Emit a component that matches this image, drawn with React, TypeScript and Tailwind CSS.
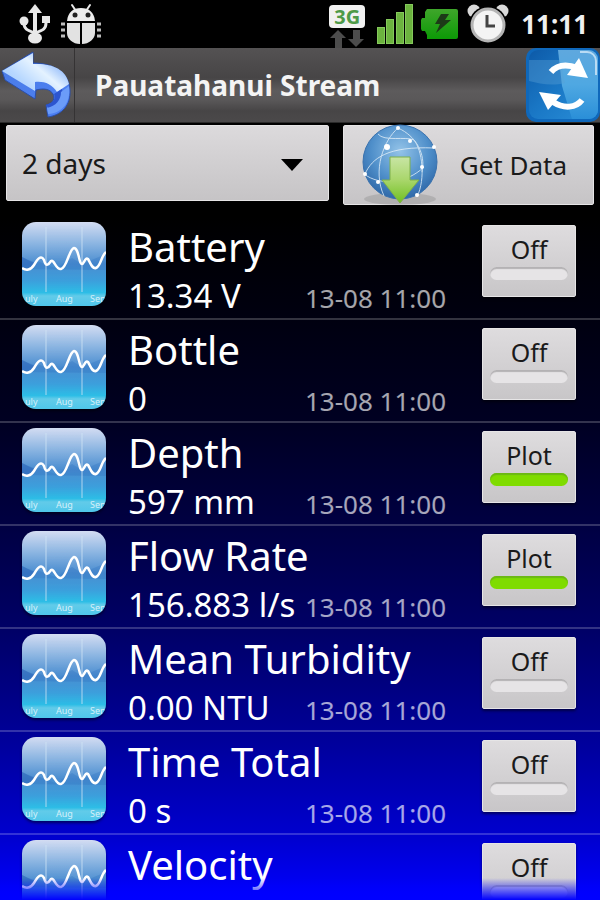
import { useState } from 'react'

type Reading = {
  name: string
  value: string
  time: string
  plot: boolean
}

const initialReadings: Reading[] = [
  { name: 'Battery', value: '13.34 V', time: '13-08 11:00', plot: false },
  { name: 'Bottle', value: '0', time: '13-08 11:00', plot: false },
  { name: 'Depth', value: '597 mm', time: '13-08 11:00', plot: true },
  { name: 'Flow Rate', value: '156.883 l/s', time: '13-08 11:00', plot: true },
  { name: 'Mean Turbidity', value: '0.00 NTU', time: '13-08 11:00', plot: false },
  { name: 'Time Total', value: '0 s', time: '13-08 11:00', plot: false },
  { name: 'Velocity', value: '', time: '', plot: false },
]

function UsbIcon() {
  return (
    <svg viewBox="0 0 34 42" className="h-[42px] w-[34px]" fill="#e8e8e8" stroke="#e8e8e8">
      <path d="M17 1L24 10H10Z" stroke="none" />
      <path d="M17 8V34" strokeWidth="4" />
      <path d="M6 18v2c0 6 3 7 11 10M28 16v4c0 6-3 7-11 10" fill="none" strokeWidth="3" />
      <circle cx="6" cy="18" r="4.5" stroke="none" />
      <rect x="24" y="13" width="8" height="7" stroke="none" />
      <ellipse cx="17" cy="35" rx="7" ry="5.5" stroke="none" />
    </svg>
  )
}

function DebugIcon() {
  return (
    <svg viewBox="0 0 42 42" className="h-[42px] w-[42px]">
      <path d="M12 2l4 6M30 2l-4 6" stroke="#e8e8e8" strokeWidth="2" strokeLinecap="round" />
      <path d="M7 18C8 9 13 5 21 5s13 4 14 13Z" fill="#ededed" />
      <circle cx="15" cy="12" r="2.5" fill="#222" />
      <circle cx="28" cy="12" r="2.5" fill="#222" />
      <path d="M7 20H20V41C13 41 7 36 7 30ZM22 20H35V30C35 36 29 41 22 41Z" fill="#e2e2e2" />
      <path
        d="M1 21h4M1 27h4M1 33h4M37 21h4M37 27h4M37 33h4"
        stroke="#bdbdbd"
        strokeWidth="3"
      />
    </svg>
  )
}

function NetworkIcon() {
  return (
    <span className="flex w-[36px] flex-col items-center">
      <span className="w-full rounded-[4px] bg-[#f1f1f1] text-center text-[20px] leading-[23px] font-bold text-[#4e9a48]">
        3G
      </span>
      <svg viewBox="0 0 34 20" className="h-[20px] w-[34px]" fill="#4c4c4c">
        <path d="M8 2l8 8h-4v10H5V10H0Z" />
        <path d="M23 2h7v9h4l-8 8-8-8h5Z" />
      </svg>
    </span>
  )
}

function SignalIcon() {
  return (
    <svg viewBox="0 0 36 40" className="h-[40px] w-[36px]" fill="#6cb33f" stroke="#85c95c">
      <rect x="0.5" y="23.5" width="7" height="16" />
      <rect x="9.5" y="15.5" width="7" height="24" />
      <rect x="19.5" y="8.5" width="7" height="31" />
      <rect x="28.5" y="0.5" width="7" height="39" />
    </svg>
  )
}

function BatteryIcon() {
  return (
    <svg viewBox="0 0 38 30" className="h-[30px] w-[38px]">
      <defs>
        <linearGradient id="battery" x1="0" y1="0" x2="0" y2="1">
          <stop offset="0" stopColor="#3fa62b" />
          <stop offset="1" stopColor="#0c9a06" />
        </linearGradient>
      </defs>
      <path d="M6 0H35a2 2 0 0 1 2 2V28a2 2 0 0 1-2 2H6V26L4 22H1L0 20V11L1 9H4V3Z" fill="url(#battery)" />
      <path d="M20 5l8 0-4 6h6L15 24l4-9h-5Z" fill="#1d3a18" />
    </svg>
  )
}

function AlarmIcon() {
  return (
    <svg viewBox="0 0 42 40" className="h-[40px] w-[42px]">
      <circle cx="7" cy="7" r="6.5" fill="#d9d9d9" />
      <circle cx="35" cy="7" r="6.5" fill="#d9d9d9" />
      <circle cx="21" cy="21" r="19" fill="#000" />
      <circle cx="21" cy="21" r="16" fill="#f4f4f4" stroke="#b5b5b5" strokeWidth="3" />
      <path d="M20 11V22H28" fill="none" stroke="#444" strokeWidth="3" />
    </svg>
  )
}

function BackIcon() {
  return (
    <svg viewBox="0 0 74 74" className="h-[74px] w-[74px]">
      <defs>
        <linearGradient id="arrow" x1="0" y1="1" x2="1" y2="0.3">
          <stop offset="0" stopColor="#9cc8fb" />
          <stop offset="0.35" stopColor="#b8d8ff" />
          <stop offset="0.65" stopColor="#e4f2ff" />
          <stop offset="1" stopColor="#74a6f8" />
        </linearGradient>
        <linearGradient id="arrowSide" x1="0" y1="0" x2="1" y2="1">
          <stop offset="0" stopColor="#4a7ce6" />
          <stop offset="1" stopColor="#4d80f4" />
        </linearGradient>
      </defs>
      <path
        d="M2 23L33 4V15C54 15 69 25 70 42C71 57 62 67 48 69L46 57C54 55 55 50 53 46C50 41 44 40 36 42L35 51L5 32Z"
        fill="url(#arrowSide)"
        stroke="#2a4ea8"
        strokeWidth="1"
      />
      <path d="M2 23L33 5V16C52 15 66 21 69 36L57 44C52 36 44 33 35 34V43Z" fill="url(#arrow)" />
      <path d="M46 57C54 55 56 50 54 46L57 44L62 41C64 50 60 58 49 61Z" fill="#2c55cf" />
      <path d="M48 66L47 60C56 58 61 52 61 44L69 38C71 54 63 65 48 66Z" fill="#6b9cf8" />
    </svg>
  )
}

function RefreshIcon() {
  return (
    <svg viewBox="0 0 74 74" className="h-[74px] w-[74px]">
      <defs>
        <linearGradient id="refresh" x1="0" y1="0" x2="1" y2="1">
          <stop offset="0" stopColor="#0d5aa8" />
          <stop offset="0.5" stopColor="#1a78c6" />
          <stop offset="1" stopColor="#2a8fd8" />
        </linearGradient>
        <linearGradient id="refreshGlow" x1="0" y1="0" x2="0" y2="1">
          <stop offset="0" stopColor="#5fa8de" />
          <stop offset="0.5" stopColor="#4fa8e2" />
          <stop offset="1" stopColor="#2a8fd8" />
        </linearGradient>
      </defs>
      <rect width="74" height="74" rx="10" fill="#0f68bb" />
      <rect x="3" y="2" width="69" height="69" rx="9" fill="url(#refresh)" />
      <path d="M32 2H63a9 9 0 0 1 9 9V62a9 9 0 0 1-9 9H46L36 38Z" fill="url(#refreshGlow)" />
      <path d="M3 12H34L39 35C26 38 14 36 3 33Z" fill="#5a9fd4" opacity="0.4" />
      <path d="M54 4h7a9 9 0 0 1 9 9v14" fill="none" stroke="#b9dbf4" strokeWidth="2" />
      <path d="M25 24C31 17 41 16 52 20" fill="none" stroke="#fff" strokeWidth="6" />
      <path d="M53 10L62 30L41 27Z" fill="#fff" />
      <path d="M56 52C50 60 38 61 27 54" fill="none" stroke="#fff" strokeWidth="6" />
      <path d="M13 44L35 47L22 62Z" fill="#fff" />
    </svg>
  )
}

function GlobeIcon() {
  return (
    <svg viewBox="0 0 80 82" className="h-[82px] w-[80px]">
      <defs>
        <radialGradient id="globe" cx="0.5" cy="0.35" r="0.65">
          <stop offset="0" stopColor="#93c3e8" />
          <stop offset="0.6" stopColor="#4f8fca" />
          <stop offset="1" stopColor="#2f68a8" />
        </radialGradient>
        <linearGradient id="download" x1="0" y1="0" x2="0" y2="1">
          <stop offset="0" stopColor="#c8e5a4" />
          <stop offset="0.5" stopColor="#a9d66b" />
          <stop offset="1" stopColor="#6fc020" />
        </linearGradient>
      </defs>
      <ellipse cx="40" cy="75" rx="36" ry="6" fill="#8f8f8f" opacity="0.4" />
      <circle cx="40" cy="38" r="37" fill="url(#globe)" stroke="#3a72ae" strokeWidth="1" />
      <g fill="none" stroke="#e3f0fa" strokeWidth="1" opacity="0.8">
        <path d="M5 50C12 34 28 22 74 24" />
        <path d="M18 10C24 18 46 12 54 16C62 26 66 54 57 73" />
        <path d="M38 4C24 16 12 46 24 72" />
        <path d="M4 50C20 62 46 60 64 43" />
        <path d="M38 4C56 12 66 30 62 48" />
      </g>
      <g fill="#fff">
        <circle cx="27" cy="23" r="3" />
        <circle cx="38" cy="4" r="2" />
        <circle cx="50" cy="17" r="2" />
        <circle cx="74" cy="23" r="2" />
        <circle cx="62" cy="43" r="2" />
        <circle cx="5" cy="50" r="2" />
        <circle cx="18" cy="58" r="2" />
        <circle cx="57" cy="71" r="2" />
      </g>
      <path
        d="M30 33H50V56H59L40 79L22 56H30Z"
        fill="url(#download)"
        stroke="#7fb04a"
        strokeWidth="1"
      />
    </svg>
  )
}

function ChartIcon() {
  return (
    <div className="h-[84px] w-[84px] shrink-0 overflow-hidden rounded-[14px] bg-[linear-gradient(#d3dcf2,#8db6e2_25%,#4a8dd0_50%,#3c9fdc_70%,#2dbde6_84%,#62cbe9_88%,#4fc6ea)] shadow-[0_2px_3px_rgba(0,0,0,0.5)]">
      <svg viewBox="0 0 84 84" className="h-full w-full">
        <path d="M0 35C6 38 12 41 18 40L24 43L34 46L50 36L60 42L84 32V48L0 47Z" fill="#2f6fc0" opacity="0.3" />
        <path d="M0 35C5 37 9 40 13 41C9 49 4 49 0 47Z" fill="#2a62b8" opacity="0.5" />
        <path d="M24 5V70M60 5V70" stroke="#cfe4f5" strokeWidth="1" opacity="0.8" />
        <path
          d="M0 46C4 49 9 48 12 43C16 36 19 33 22 38C24 46 27 42 29 39C32 37 34 48 39 47C45 46 47 27 52 26C57 26 57 43 60 42C62 42 63 35 66 37C69 42 70 47 74 46C79 44 79 34 84 30"
          fill="none"
          stroke="#fff"
          strokeWidth="2.5"
        />
        <g fill="#d5f0fa" fontSize="9">
          <text x="3" y="80">uly</text>
          <text x="34" y="80">Aug</text>
          <text x="68" y="80">Sep</text>
        </g>
      </svg>
    </div>
  )
}

function PlotToggle({ name, on, onToggle }: { name: string; on: boolean; onToggle: () => void }) {
  return (
    <button
      type="button"
      aria-pressed={on}
      aria-label={`${name} ${on ? 'Plot' : 'Off'}`}
      onClick={onToggle}
      className="mt-2 mr-6 ml-9 flex h-[72px] w-[94px] shrink-0 flex-col items-center rounded-[2px] border border-[#e6e5e6] bg-linear-to-b from-[#dedcde] to-[#c8c6c8] pt-[5px] text-[25px] leading-[36px] text-[#1a1a1a] shadow-[0_2px_3px_rgba(0,0,0,0.5)]"
    >
      {on ? 'Plot' : 'Off'}
      <span
        className={
          on
            ? 'h-[13px] w-[78px] rounded-full bg-[#7fdc00] shadow-[inset_0_2px_1px_#6cb814]'
            : 'h-[13px] w-[78px] rounded-full bg-[#e6e4e6] shadow-[inset_0_2px_1px_#b4b2b4]'
        }
      />
    </button>
  )
}

export default function App() {
  const [readings, setReadings] = useState(initialReadings)
  const [period, setPeriod] = useState('2 days')

  const toggle = (name: string) => {
    setReadings((prev) => prev.map((r) => (r.name === name ? { ...r, plot: !r.plot } : r)))
  }

  return (
    <div className="flex h-screen flex-col overflow-hidden bg-black font-['Noto_Sans','Open_Sans',sans-serif] text-white">
      <div className="flex h-[48px] shrink-0 items-center pr-3 pl-[18px]">
        <UsbIcon />
        <span className="ml-2">
          <DebugIcon />
        </span>
        <div className="ml-auto flex items-center">
          <span className="pt-1">
            <NetworkIcon />
          </span>
          <span className="ml-3">
            <SignalIcon />
          </span>
          <span className="ml-2">
            <BatteryIcon />
          </span>
          <span className="ml-2">
            <AlarmIcon />
          </span>
          <span className="ml-3 text-[26px] leading-[36px] font-bold text-[#f0f0f0]">11:11</span>
        </div>
      </div>

      <header className="flex h-[75px] shrink-0 items-center border-b border-[#2a2a2a] bg-[linear-gradient(#545253,#474546_40%,#5d5b5c_58%,#5a5859_70%,#474546_85%,#4b494a)]">
        <button type="button" aria-label="Back" className="border-r border-[#353334]">
          <BackIcon />
        </button>
        <h1 className="min-w-0 flex-1 truncate pl-5 text-[28px] leading-[40px] font-bold text-[#f4f4f4]">
          Pauatahanui Stream
        </h1>
        <button type="button" aria-label="Refresh">
          <RefreshIcon />
        </button>
      </header>

      <div className="grid h-[94px] shrink-0 grid-cols-[9fr_7fr] items-start gap-[14px] px-[6px] pt-[2px]">
        <div className="relative">
          <select
            aria-label="Period"
            value={period}
            onChange={(e) => setPeriod(e.target.value)}
            className="h-[76px] w-full appearance-none rounded-[2px] border border-[#e6e5e6] bg-linear-to-b from-[#dcdadc] to-[#c6c4c6] px-[15px] text-[28px] leading-[40px] text-[#1a1a1a]"
          >
            <option>2 days</option>
            <option>7 days</option>
            <option>30 days</option>
          </select>
          <svg
            viewBox="0 0 22 12"
            className="pointer-events-none absolute top-[34px] right-[26px] h-[12px] w-[22px]"
          >
            <path d="M0 0H22L11 12Z" fill="#000" />
          </svg>
        </div>
        <button
          type="button"
          className="flex h-[80px] items-center justify-between rounded-[2px] border border-[#e6e5e6] bg-linear-to-b from-[#dcdadc] to-[#c6c4c6] pr-[26px] pl-[16px] text-[26px] leading-[36px] whitespace-nowrap text-[#1a1a1a]"
        >
          <GlobeIcon />
          Get Data
        </button>
      </div>

      <div className="relative min-h-0 flex-1 overflow-hidden bg-[linear-gradient(#000,#000010_15%,#000022_30%,#000044_46%,#000068_61%,#000098_76%,#0000d0_91%,#0000ff)]">
        <ul>
          {readings.map((r) => (
            <li key={r.name} className="flex h-[103px] items-start border-b-2 border-white/20 pl-[22px]">
              <div className="pt-[5px]">
                <ChartIcon />
              </div>
              <div className="min-w-0 flex-1 pt-[5px] pl-[22px] whitespace-nowrap">
                <h2 className="text-[40px] leading-[50px]">{r.name}</h2>
                <div className="flex items-baseline justify-between">
                  <span className="text-[33px] leading-[48px]">{r.value}</span>
                  <span className="text-[26px] leading-[36px] text-white/65">{r.time}</span>
                </div>
              </div>
              <PlotToggle name={r.name} on={r.plot} onToggle={() => toggle(r.name)} />
            </li>
          ))}
        </ul>
        <div className="pointer-events-none absolute inset-x-0 bottom-0 h-[22px] bg-linear-to-b from-[#0000ff]/0 to-[#0000ff]" />
      </div>
    </div>
  )
}
